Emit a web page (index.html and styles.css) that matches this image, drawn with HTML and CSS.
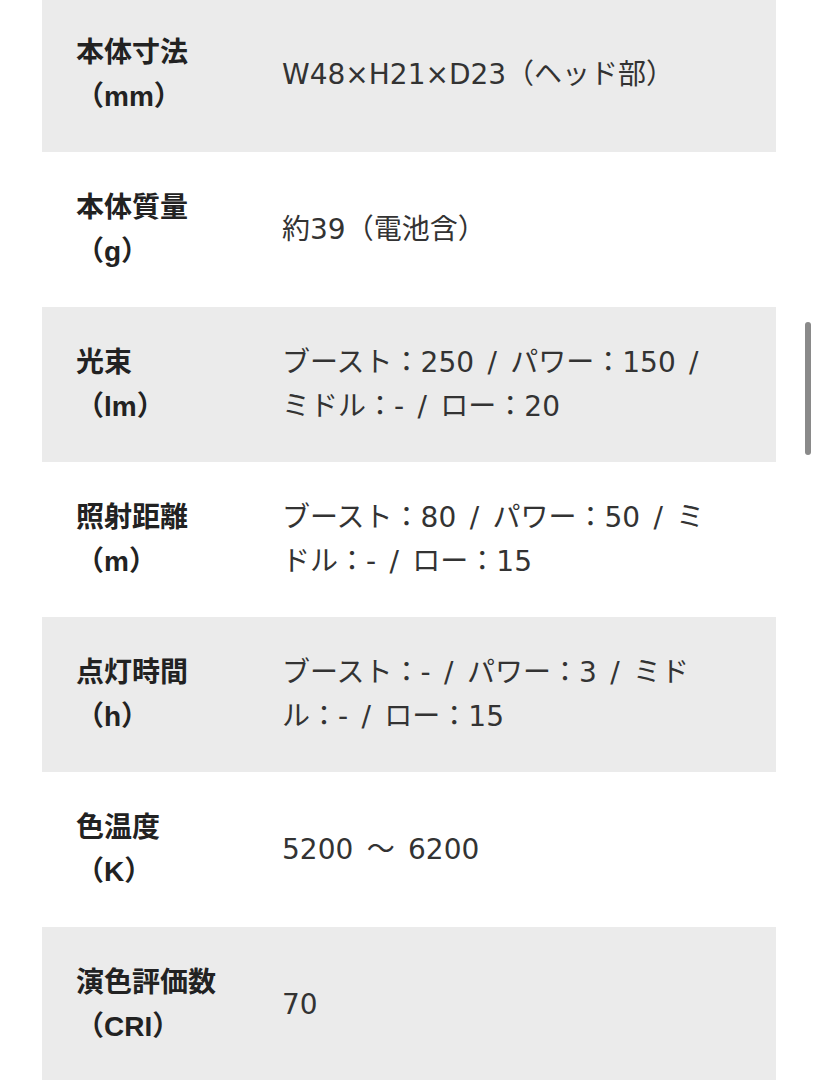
FILE: index.html
```html
<!DOCTYPE html>
<html lang="ja">
<head>
<meta charset="utf-8">
<link rel="stylesheet" href="styles.css">
</head>
<body>
<div class="spec">
  <div class="row shade">
    <div class="label">本体寸法<br>（mm）</div>
    <div class="value">W48×H21×D23（ヘッド部）</div>
  </div>
  <div class="row">
    <div class="label">本体質量<br>（g）</div>
    <div class="value">約39（電池含）</div>
  </div>
  <div class="row shade">
    <div class="label">光束<br>（lm）</div>
    <div class="value">ブースト：250 / パワー：150 / ミドル：- / ロー：20</div>
  </div>
  <div class="row">
    <div class="label">照射距離<br>（m）</div>
    <div class="value">ブースト：80 / パワー：50 / ミドル：- / ロー：15</div>
  </div>
  <div class="row shade">
    <div class="label">点灯時間<br>（h）</div>
    <div class="value">ブースト：- / パワー：3 / ミドル：- / ロー：15</div>
  </div>
  <div class="row">
    <div class="label">色温度<br>（K）</div>
    <div class="value">5200 ～ 6200</div>
  </div>
  <div class="row shade">
    <div class="label">演色評価数<br>（CRI）</div>
    <div class="value">70</div>
  </div>
</div>
<div class="scrollbar"></div>
</body>
</html>
```

FILE: styles.css
```css
html, body {
  margin: 0;
  padding: 0;
  background: #ffffff;
  overflow: hidden;
}
body {
  font-family: "Noto Sans CJK JP", sans-serif;
  color: #2b2b2b;
}
.spec {
  margin: -3px 42px 0 42px;
  width: 734px;
}
.row {
  display: grid;
  grid-template-columns: 240px 430px;
  align-items: center;
  padding: 33.5px 0;
  line-height: 44px;
}
.shade {
  background: #ebebeb;
}
.label {
  padding-left: 34px;
  font-family: "Liberation Sans", "Noto Sans CJK JP", sans-serif;
  font-size: 28px;
  font-weight: bold;
  color: #222222;
}
.value {
  font-family: "DejaVu Sans", "Noto Sans CJK JP", sans-serif;
  font-size: 28px;
  word-spacing: 4.5px;
  color: #333333;
}
.scrollbar {
  position: fixed;
  left: 805px;
  top: 322px;
  width: 6px;
  height: 133px;
  border-radius: 3px;
  background: #8a8a8a;
}
```
